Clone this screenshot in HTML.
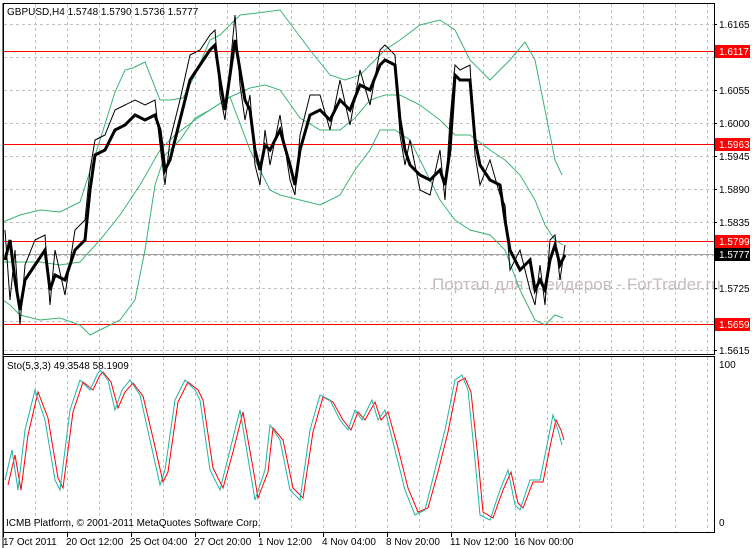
<!DOCTYPE html>
<html><head><meta charset="utf-8"><style>
html,body{margin:0;padding:0;background:#fff;}
svg{display:block;font-family:"Liberation Sans","DejaVu Sans",sans-serif;}
</style></head><body>
<svg width="752" height="548" viewBox="0 0 752 548" xmlns="http://www.w3.org/2000/svg">
<rect width="752" height="548" fill="#fff"/>
<g stroke="#c0c0c0" stroke-dasharray="3,3" stroke-width="1">
<path d="M35.5 4V353M67.5 4V353M99.5 4V353M131.5 4V353M163.5 4V353M195.5 4V353M227.5 4V353M259.5 4V353M291.5 4V353M323.5 4V353M355.5 4V353M387.5 4V353M419.5 4V353M451.5 4V353M483.5 4V353M515.5 4V353M547.5 4V353M579.5 4V353M611.5 4V353M643.5 4V353M675.5 4V353M707.5 4V353"/>
<path d="M35.5 357V532M67.5 357V532M99.5 357V532M131.5 357V532M163.5 357V532M195.5 357V532M227.5 357V532M259.5 357V532M291.5 357V532M323.5 357V532M355.5 357V532M387.5 357V532M419.5 357V532M451.5 357V532M483.5 357V532M515.5 357V532M547.5 357V532M579.5 357V532M611.5 357V532M643.5 357V532M675.5 357V532M707.5 357V532"/>
<path d="M4 24.5H714M4 57.5H714M4 90.5H714M4 123.5H714M4 156.5H714M4 189.5H714M4 222.5H714M4 255.5H714M4 288.5H714M4 321.5H714M4 350.5H714"/>
</g>
<text x="432" y="290" font-size="17" fill="#c8bcbc">Портал для трейдеров - ForTrader.ru</text>
<g fill="none" stroke="#ff0000" stroke-width="1">
<path d="M3 51.5H714M3 144.5H714M3 241.5H714M3 324.5H714"/>
</g>
<path d="M3 254.5H714" stroke="#a0a0a0" stroke-width="1"/>
<g fill="none" stroke="#3cb371" stroke-width="1">
<polyline points="3,222 20,215 40,210 60,212 80,202 100,140 115,92 125,70 133,68 145,62 160,100 170,100 183,98 195,75 210,40 220,35 235,20 240,15 265,12 280,10 295,30 310,50 330,75 345,80 360,75 375,60 385,50 400,40 420,25 440,20 455,30 470,60 490,80 510,60 525,42 535,60 545,110 555,160 562,175"/>
<polyline points="3,262 20,262 40,262 60,265 80,262 100,240 120,215 140,185 160,150 175,135 195,120 210,110 230,97 250,88 265,85 280,90 300,118 320,130 340,130 355,118 370,100 385,95 400,95 420,105 440,120 455,135 470,135 490,150 505,160 520,175 535,200 545,225 555,240 563,245"/>
<polyline points="3,300 10,305 20,315 40,320 60,318 80,325 90,335 100,330 120,320 135,300 145,250 155,185 165,155 180,140 195,118 210,110 230,97 250,150 260,170 270,190 280,195 300,200 320,205 340,195 355,170 370,150 380,130 395,130 410,140 420,160 440,200 455,220 470,230 490,235 505,250 520,290 535,320 545,325 555,315 563,318"/>
</g>
<g fill="none" stroke="#000" stroke-width="3">
<polyline points="5,260 10,240 15,280 20,310 25,280 35,265 45,250 50,290 55,275 65,280 75,250 85,240 90,190 95,155 105,150 115,130 125,125 135,115 145,120 155,115 160,130 165,170 170,160 180,120 190,80 200,65 210,50 215,45 220,80 225,110 235,40 240,70 245,100 250,110 255,150 260,170 265,145 270,150 280,130 290,165 295,185 300,150 310,115 320,110 330,120 340,100 350,110 360,85 370,90 380,65 385,60 395,65 400,120 405,150 410,165 420,175 430,180 440,170 445,185 450,150 455,75 460,80 470,80 475,140 480,165 490,180 500,185 505,220 510,250 520,270 530,260 535,290 540,280 545,290 550,260 555,245 560,265 565,255"/>
</g>
<g fill="none" stroke="#000" stroke-width="1">
<polyline points="5,230 10,300 15,250 20,325 25,265 35,240 45,235 50,305 55,250 65,295 75,230 85,220 90,170 95,140 105,135 115,110 125,105 135,100 145,105 155,100 160,145 165,185 170,140 180,100 190,55 200,50 210,35 215,30 220,95 225,120 235,15 240,85 245,120 250,95 255,165 260,185 265,130 270,165 280,115 290,180 295,195 300,135 310,95 320,95 330,130 340,80 350,125 360,70 370,105 380,50 385,45 395,55 400,135 405,165 410,140 420,190 430,195 440,150 445,200 450,120 455,65 460,70 470,65 475,155 480,185 490,160 500,195 505,205 510,270 520,250 530,290 535,305 540,265 545,305 550,240 555,235 560,280 565,245"/>
</g>
<rect x="3.5" y="3.5" width="711" height="351" fill="none" stroke="#000"/>
<rect x="3.5" y="356.5" width="711" height="176" fill="none" stroke="#000"/>
<g fill="#fff"><rect x="0" y="0" width="3" height="548"/></g>
<path d="M3 3V548" stroke="#000"/>
<text x="7" y="15" font-size="10" fill="#000">GBPUSD,H4  1.5748 1.5790 1.5736 1.5777</text>
<g font-size="10" fill="#000">
<text x="719" y="28">1.6165</text><text x="719" y="94">1.6055</text><text x="719" y="127">1.6000</text><text x="719" y="160">1.5945</text><text x="719" y="193">1.5890</text><text x="719" y="226">1.5835</text><text x="719" y="292">1.5725</text><text x="719" y="354">1.5615</text>
<text x="719" y="368">100</text><text x="719" y="526">0</text>
</g>
<g stroke="#000"><path d="M714 24.5h3M714 90.5h3M714 123.5h3M714 156.5h3M714 189.5h3M714 222.5h3M714 288.5h3M714 350.5h3"/></g>
<rect x="715" y="45" width="35" height="13" fill="#ff0000"/><text x="719" y="55" font-size="10" fill="#fff">1.6117</text>
<rect x="715" y="138" width="35" height="13" fill="#ff0000"/><text x="719" y="148" font-size="10" fill="#fff">1.5963</text>
<rect x="715" y="235" width="35" height="13" fill="#ff0000"/><text x="719" y="245" font-size="10" fill="#fff">1.5799</text>
<rect x="715" y="248" width="35" height="13" fill="#000"/><text x="719" y="258" font-size="10" fill="#fff">1.5777</text>
<rect x="715" y="318" width="35" height="13" fill="#ff0000"/><text x="719" y="328" font-size="10" fill="#fff">1.5659</text>
<text x="7" y="369" font-size="10" fill="#000">Sto(5,3,3) 49.3548 58.1909</text>
<polyline fill="none" stroke="#ff0000" points="8,485 15,455 21,490 28,435 38,392 48,418 58,478 63,488 73,412 83,382 93,390 100,375 103,372 111,382 118,408 125,392 133,383 143,396 153,438 163,482 168,472 178,402 188,382 198,390 203,400 213,468 223,488 233,452 243,412 253,468 258,498 268,472 273,428 283,440 293,488 303,498 313,432 323,397 333,402 343,420 351,430 358,412 365,420 375,402 381,420 388,412 398,448 408,488 418,512 428,508 438,472 448,432 458,382 465,378 471,392 478,458 483,512 493,518 503,490 511,472 518,503 523,508 533,482 543,482 551,442 556,420 561,430 564,440"/>
<polyline fill="none" stroke="#20b2aa" points="5,480 12,450 18,490 25,430 35,390 45,420 55,480 60,490 70,410 80,380 90,390 97,375 100,370 108,380 115,410 122,390 130,380 140,395 150,440 160,485 165,470 175,400 185,380 195,390 200,400 210,470 220,490 230,450 240,410 250,470 255,500 265,470 270,425 280,440 290,490 300,500 310,430 320,395 330,400 340,420 348,430 355,410 362,420 372,400 378,420 385,410 395,450 405,490 415,515 425,510 435,470 445,430 455,380 462,375 468,390 475,460 480,515 490,520 500,490 508,470 515,505 520,510 530,480 540,480 548,440 553,415 558,430 562,445"/>
<text x="6" y="526" font-size="10" fill="#000">ICMB Platform, © 2001-2011 MetaQuotes Software Corp.</text>
<g stroke="#000"><path d="M3.5 533v4M67.5 533v4M131.5 533v4M195.5 533v4M259.5 533v4M323.5 533v4M387.5 533v4M451.5 533v4M515.5 533v4"/></g>
<g font-size="10" fill="#000">
<text x="3" y="545">17 Oct 2011</text><text x="66" y="545">20 Oct 12:00</text><text x="130" y="545">25 Oct 04:00</text><text x="194" y="545">27 Oct 20:00</text><text x="258" y="545">1 Nov 12:00</text><text x="322" y="545">4 Nov 04:00</text><text x="386" y="545">8 Nov 20:00</text><text x="450" y="545">11 Nov 12:00</text><text x="514" y="545">16 Nov 00:00</text>
</g>
</svg>
</body></html>
